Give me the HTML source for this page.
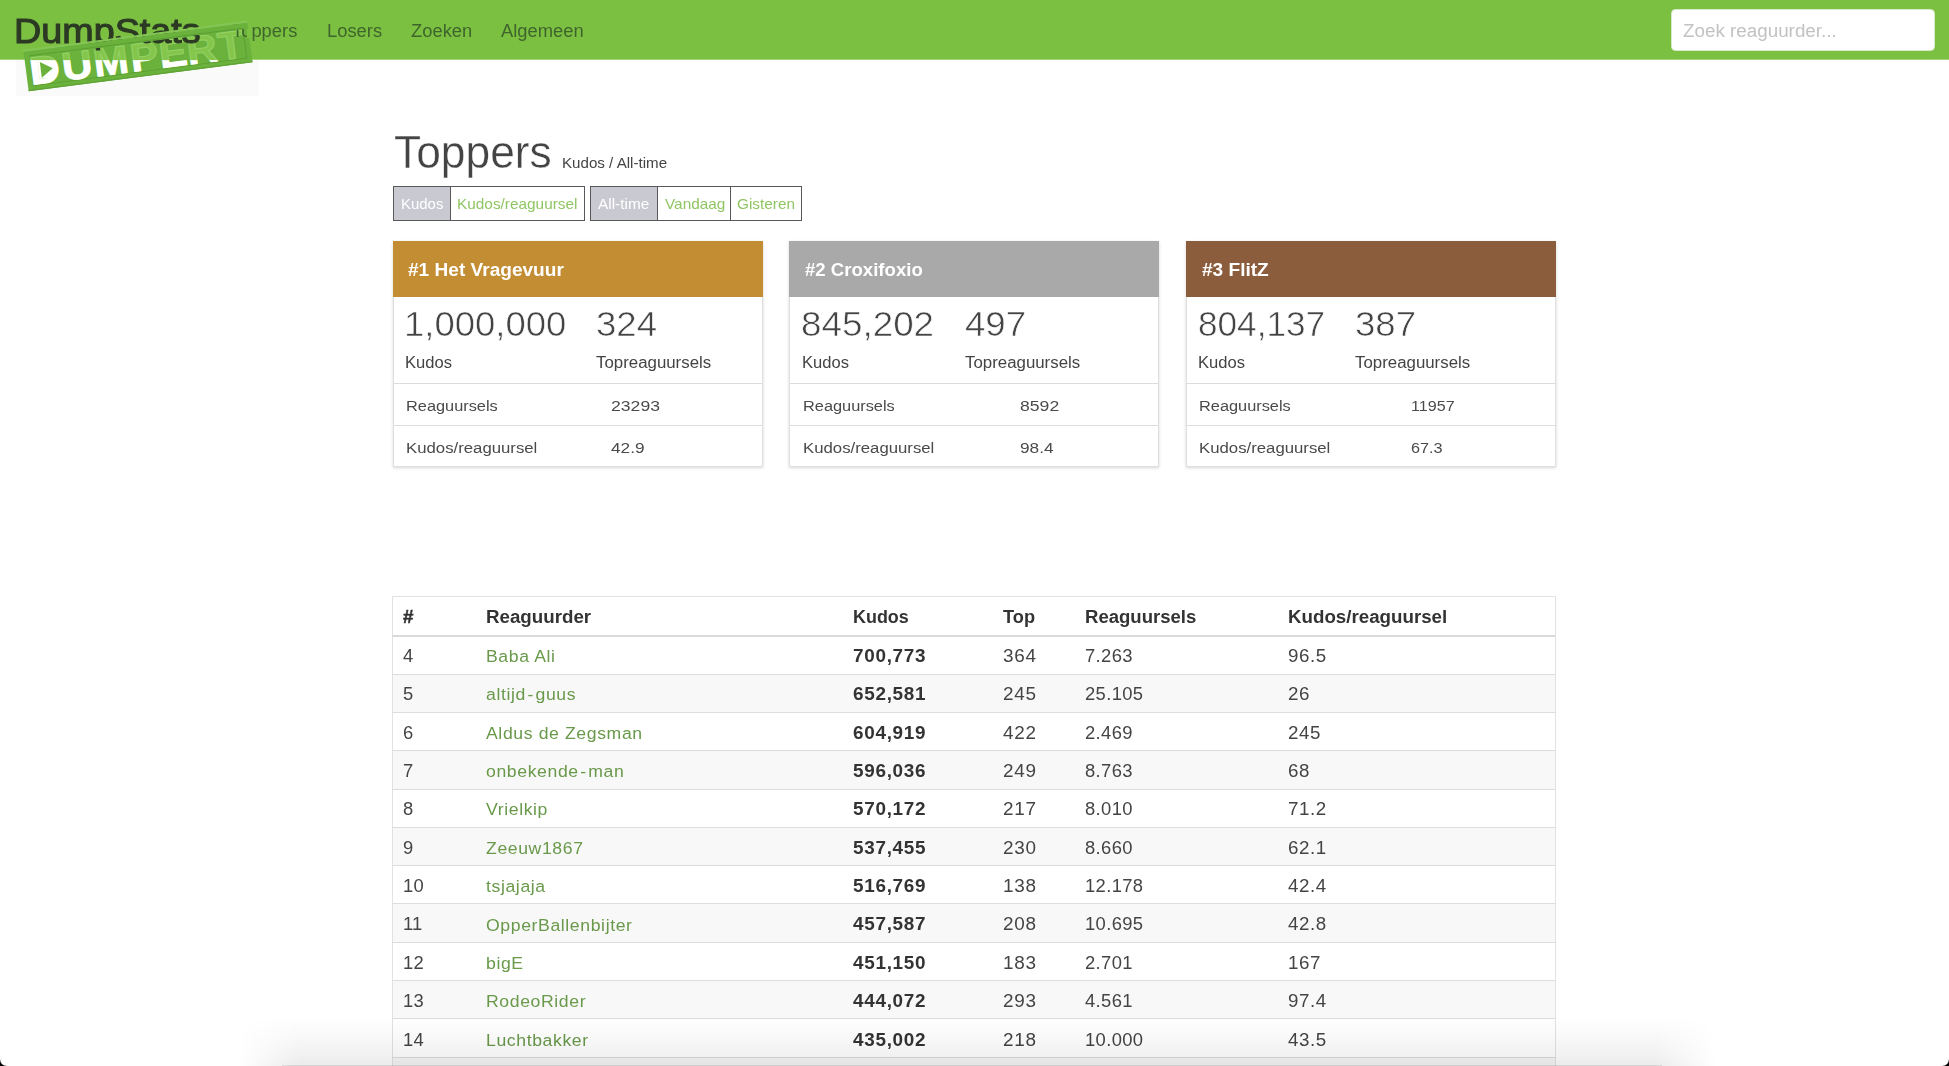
<!DOCTYPE html>
<html lang="nl"><head><meta charset="utf-8"><title>DumpStats - Toppers</title>
<style>
html,body{margin:0;padding:0;}
html{width:1949px;height:1066px;overflow:hidden;}
body{width:1949px;height:1066px;overflow:hidden;background:#fff;position:relative;font-family:"Liberation Sans", sans-serif;}
.t{position:absolute;white-space:nowrap;transform-origin:0 50%;display:block;margin:0;padding:0;font-weight:normal;text-decoration:none;text-align:left;border:0;}
table,thead,tbody,tr,nav,header,section,main{display:contents;}
.r{position:absolute;box-sizing:border-box;}
</style></head>
<body>
<nav>
<div class="r" style="left:0px;top:0px;width:1949px;height:59px;background:#7cc042;"></div>
<div class="r" style="left:0px;top:59px;width:1949px;height:1px;background:#a3d27a;"></div>
<div class="r" style="left:16px;top:60px;width:243px;height:35.5px;background:#fafafa;"></div>
<svg class="r" style="left:0;top:0;overflow:visible" width="300" height="110" viewBox="0 0 300 110">
<defs><linearGradient id="lgf" gradientUnits="userSpaceOnUse" x1="0" y1="50" x2="0" y2="70" gradientTransform="scale(0.93897 1) rotate(7.4) translate(-23.5 -51.5)"><stop offset="0" stop-color="#84c64c"/><stop offset="0.485" stop-color="#84c64c"/><stop offset="0.53" stop-color="#ffffff"/><stop offset="1" stop-color="#ffffff"/></linearGradient><linearGradient id="lgs" gradientUnits="userSpaceOnUse" x1="0" y1="50" x2="0" y2="70" gradientTransform="scale(0.93897 1) rotate(7.4) translate(-23.5 -51.5)"><stop offset="0" stop-color="#95d166"/><stop offset="0.485" stop-color="#95d166"/><stop offset="0.53" stop-color="#ffffff"/><stop offset="1" stop-color="#ffffff"/></linearGradient><linearGradient id="lgd" gradientUnits="userSpaceOnUse" x1="0" y1="50" x2="0" y2="70" gradientTransform="rotate(7.4) translate(-23.5 -51.5)"><stop offset="0" stop-color="#84c64c"/><stop offset="0.485" stop-color="#84c64c"/><stop offset="0.53" stop-color="#ffffff"/><stop offset="1" stop-color="#ffffff"/></linearGradient></defs>
<g transform="translate(23.5 51.5) rotate(-7.4)">
<rect x="0" y="-1.6" width="225.5" height="2.2" fill="#84c655"/>
<rect x="0" y="0" width="225.8" height="40.2" fill="#6bb23d"/>
<rect x="0" y="38.8" width="225.8" height="1.4" fill="#5fa335"/>
<rect x="5.5" y="4.3" width="215" height="31" fill="none" stroke="#5b9f34" stroke-width="1"/>
<text transform="scale(1.065 1)" x="3.19 33.9 63.76 98.5 125.82 152.11 181.6" y="34.3" font-family="Liberation Sans, sans-serif" font-weight="bold" font-size="39.5" fill="url(#lgf)" stroke="url(#lgs)" stroke-width="0.9" stroke-linejoin="round">DUMPERT</text>
<path d="M12.5 11 L25.5 11 L25.5 29.3 L12.5 29.3 Z" fill="url(#lgd)"/>
<path d="M14.8 12.6 L26.8 20.4 L14.8 28.3 Z" fill="#6bb23d"/>
</g></svg>
<a class="t" style="left:14.40px;top:10.07px;font-size:35px;line-height:42px;color:#2c3a24;transform:scaleX(1.078);-webkit-text-stroke:1.1px #2c3a24;">DumpStats</a>
<a class="t" style="left:232.00px;top:19.56px;font-size:18px;line-height:22px;color:#3e652b;transform:scaleX(1.02);">Toppers</a>
<a class="t" style="left:326.70px;top:19.56px;font-size:18px;line-height:22px;color:#3e652b;transform:scaleX(1.02);">Losers</a>
<a class="t" style="left:410.70px;top:19.56px;font-size:18px;line-height:22px;color:#3e652b;transform:scaleX(1.02);">Zoeken</a>
<a class="t" style="left:501.00px;top:19.56px;font-size:18px;line-height:22px;color:#3e652b;transform:scaleX(1.02);">Algemeen</a>
<div class="r" style="left:247.4px;top:23px;width:4.4px;height:15px;background:#7cc042;"></div>
<svg class="r" style="left:0;top:0;overflow:visible" width="300" height="110" viewBox="0 0 300 110">
<g transform="translate(23.5 51.5) rotate(-7.4)">
<rect x="0" y="-1.6" width="225.5" height="2.2" fill="#84c655"/>
<rect x="0" y="0.4" width="225.8" height="5.7" fill="#6bb23d"/>
<rect x="5.5" y="4.6" width="215" height="1" fill="#5b9f34"/>
</g></svg>
<div class="r" style="left:1671px;top:9.2px;width:264px;height:41.4px;background:#fff;border-radius:4.5px;border:1px solid #d9e8cc;"></div>
<label class="t" style="left:1682.90px;top:19.56px;font-size:18px;line-height:22px;color:#c2c2c2;transform:scaleX(1.045);">Zoek reaguurder...</label>
</nav>
<main>
<h1 class="t" style="left:393.50px;top:124.56px;font-size:46px;line-height:55px;color:#444;transform:scaleX(0.964);-webkit-text-stroke:0.4px #fff;">Toppers</h1>
<small class="t" style="left:562.40px;top:154.65px;font-size:14px;line-height:17px;color:#444;transform:scaleX(1.08);">Kudos / All-time</small>
<div class="r" style="left:393px;top:185.6px;width:58px;height:35.7px;background:#c9c9d1;border:1.7px solid #58585a;"></div>
<a class="t" style="left:400.50px;top:195.68px;font-size:14.5px;line-height:17px;color:#fff;transform:scaleX(1.03);">Kudos</a>
<div class="r" style="left:450px;top:185.6px;width:135px;height:35.7px;background:#fff;border:1.7px solid #58585a;"></div>
<a class="t" style="left:456.50px;top:195.68px;font-size:14.5px;line-height:17px;color:#90c563;transform:scaleX(1.06);">Kudos/reaguursel</a>
<div class="r" style="left:590px;top:185.6px;width:68px;height:35.7px;background:#c9c9d1;border:1.7px solid #58585a;"></div>
<a class="t" style="left:597.50px;top:195.68px;font-size:14.5px;line-height:17px;color:#fff;transform:scaleX(1.06);">All-time</a>
<div class="r" style="left:657px;top:185.6px;width:74px;height:35.7px;background:#fff;border:1.7px solid #58585a;"></div>
<a class="t" style="left:664.50px;top:195.68px;font-size:14.5px;line-height:17px;color:#90c563;transform:scaleX(1.06);">Vandaag</a>
<div class="r" style="left:730px;top:185.6px;width:72px;height:35.7px;background:#fff;border:1.7px solid #58585a;"></div>
<a class="t" style="left:737.00px;top:195.68px;font-size:14.5px;line-height:17px;color:#90c563;transform:scaleX(1.06);">Gisteren</a>
<section>
<div class="r" style="left:392.9px;top:241px;width:370.2px;height:226px;background:#fff;border:1px solid #dfdfdf;box-shadow:0 1px 3px rgba(0,0,0,.16);"></div>
<div class="r" style="left:392.9px;top:241px;width:370.2px;height:56px;background:#c38d34;"></div>
<h5 class="t" style="left:408.30px;top:259.94px;font-size:17.5px;line-height:21px;color:#fff;font-weight:bold;transform:scaleX(1.09);">#1 Het Vragevuur</h5>
<span class="t" style="left:404.30px;top:303.07px;font-size:35px;line-height:42px;color:#444;transform:scaleX(1.043);-webkit-text-stroke:0.6px #fff;">1,000,000</span>
<span class="t" style="left:595.50px;top:303.07px;font-size:35px;line-height:42px;color:#444;transform:scaleX(1.046);-webkit-text-stroke:0.6px #fff;">324</span>
<span class="t" style="left:405.10px;top:352.56px;font-size:16px;line-height:19px;color:#444;transform:scaleX(1.034);">Kudos</span>
<span class="t" style="left:595.60px;top:352.56px;font-size:16px;line-height:19px;color:#444;transform:scaleX(1.053);">Topreaguursels</span>
<div class="r" style="left:393.9px;top:382.5px;width:368.2px;height:1px;background:#dcdcdc;"></div>
<span class="t" style="left:406.10px;top:396.13px;font-size:15.5px;line-height:19px;color:#4a4a4a;transform:scaleX(1.054);">Reaguursels</span>
<span class="t" style="left:610.60px;top:396.13px;font-size:15.5px;line-height:19px;color:#4a4a4a;transform:scaleX(1.136);">23293</span>
<div class="r" style="left:393.9px;top:425px;width:368.2px;height:1px;background:#dcdcdc;"></div>
<span class="t" style="left:406.10px;top:437.73px;font-size:15.5px;line-height:19px;color:#4a4a4a;transform:scaleX(1.081);">Kudos/reaguursel</span>
<span class="t" style="left:610.60px;top:437.73px;font-size:15.5px;line-height:19px;color:#4a4a4a;transform:scaleX(1.11);">42.9</span>
</section>
<section>
<div class="r" style="left:789.3px;top:241px;width:370.2px;height:226px;background:#fff;border:1px solid #dfdfdf;box-shadow:0 1px 3px rgba(0,0,0,.16);"></div>
<div class="r" style="left:789.3px;top:241px;width:370.2px;height:56px;background:#a9a9a9;"></div>
<h5 class="t" style="left:804.70px;top:259.94px;font-size:17.5px;line-height:21px;color:#fff;font-weight:bold;transform:scaleX(1.062);">#2 Croxifoxio</h5>
<span class="t" style="left:800.70px;top:303.07px;font-size:35px;line-height:42px;color:#444;transform:scaleX(1.052);-webkit-text-stroke:0.6px #fff;">845,202</span>
<span class="t" style="left:964.50px;top:303.07px;font-size:35px;line-height:42px;color:#444;transform:scaleX(1.046);-webkit-text-stroke:0.6px #fff;">497</span>
<span class="t" style="left:801.50px;top:352.56px;font-size:16px;line-height:19px;color:#444;transform:scaleX(1.034);">Kudos</span>
<span class="t" style="left:964.60px;top:352.56px;font-size:16px;line-height:19px;color:#444;transform:scaleX(1.053);">Topreaguursels</span>
<div class="r" style="left:790.3px;top:382.5px;width:368.2px;height:1px;background:#dcdcdc;"></div>
<span class="t" style="left:802.50px;top:396.13px;font-size:15.5px;line-height:19px;color:#4a4a4a;transform:scaleX(1.054);">Reaguursels</span>
<span class="t" style="left:1019.60px;top:396.13px;font-size:15.5px;line-height:19px;color:#4a4a4a;transform:scaleX(1.136);">8592</span>
<div class="r" style="left:790.3px;top:425px;width:368.2px;height:1px;background:#dcdcdc;"></div>
<span class="t" style="left:802.50px;top:437.73px;font-size:15.5px;line-height:19px;color:#4a4a4a;transform:scaleX(1.081);">Kudos/reaguursel</span>
<span class="t" style="left:1019.60px;top:437.73px;font-size:15.5px;line-height:19px;color:#4a4a4a;transform:scaleX(1.11);">98.4</span>
</section>
<section>
<div class="r" style="left:1186.1px;top:241px;width:370.2px;height:226px;background:#fff;border:1px solid #dfdfdf;box-shadow:0 1px 3px rgba(0,0,0,.16);"></div>
<div class="r" style="left:1186.1px;top:241px;width:370.2px;height:56px;background:#8c5d3d;"></div>
<h5 class="t" style="left:1201.50px;top:259.94px;font-size:17.5px;line-height:21px;color:#fff;font-weight:bold;transform:scaleX(1.09);">#3 FlitZ</h5>
<span class="t" style="left:1197.50px;top:303.07px;font-size:35px;line-height:42px;color:#444;transform:scaleX(1.004);-webkit-text-stroke:0.6px #fff;">804,137</span>
<span class="t" style="left:1355.00px;top:303.07px;font-size:35px;line-height:42px;color:#444;transform:scaleX(1.046);-webkit-text-stroke:0.6px #fff;">387</span>
<span class="t" style="left:1198.30px;top:352.56px;font-size:16px;line-height:19px;color:#444;transform:scaleX(1.034);">Kudos</span>
<span class="t" style="left:1355.10px;top:352.56px;font-size:16px;line-height:19px;color:#444;transform:scaleX(1.053);">Topreaguursels</span>
<div class="r" style="left:1187.1px;top:382.5px;width:368.2px;height:1px;background:#dcdcdc;"></div>
<span class="t" style="left:1199.30px;top:396.13px;font-size:15.5px;line-height:19px;color:#4a4a4a;transform:scaleX(1.054);">Reaguursels</span>
<span class="t" style="left:1410.60px;top:396.13px;font-size:15.5px;line-height:19px;color:#4a4a4a;transform:scaleX(1.04);">11957</span>
<div class="r" style="left:1187.1px;top:425px;width:368.2px;height:1px;background:#dcdcdc;"></div>
<span class="t" style="left:1199.30px;top:437.73px;font-size:15.5px;line-height:19px;color:#4a4a4a;transform:scaleX(1.081);">Kudos/reaguursel</span>
<span class="t" style="left:1410.60px;top:437.73px;font-size:15.5px;line-height:19px;color:#4a4a4a;transform:scaleX(1.047);">67.3</span>
</section>
<div class="r" style="left:392.2px;top:596.2px;width:1163.8px;height:469.8px;background:#fff;border:1px solid #e2e2e2;border-bottom:0;"></div>
<div class="r" style="left:393.2px;top:674.1899999999999px;width:1161.8px;height:38.29px;background:#f8f8f8;"></div>
<div class="r" style="left:393.2px;top:750.77px;width:1161.8px;height:38.29px;background:#f8f8f8;"></div>
<div class="r" style="left:393.2px;top:827.3499999999999px;width:1161.8px;height:38.29px;background:#f8f8f8;"></div>
<div class="r" style="left:393.2px;top:903.93px;width:1161.8px;height:38.29px;background:#f8f8f8;"></div>
<div class="r" style="left:393.2px;top:980.51px;width:1161.8px;height:38.29px;background:#f8f8f8;"></div>
<div class="r" style="left:393.2px;top:1057.09px;width:1161.8px;height:8.910000000000082px;background:#f8f8f8;"></div>
<div class="r" style="left:392.2px;top:634.6px;width:1163.8px;height:2px;background:#dadada;"></div>
<div class="r" style="left:392.2px;top:673.6899999999999px;width:1163.8px;height:1px;background:#dddddd;"></div>
<div class="r" style="left:392.2px;top:711.98px;width:1163.8px;height:1px;background:#dddddd;"></div>
<div class="r" style="left:392.2px;top:750.27px;width:1163.8px;height:1px;background:#dddddd;"></div>
<div class="r" style="left:392.2px;top:788.56px;width:1163.8px;height:1px;background:#dddddd;"></div>
<div class="r" style="left:392.2px;top:826.8499999999999px;width:1163.8px;height:1px;background:#dddddd;"></div>
<div class="r" style="left:392.2px;top:865.14px;width:1163.8px;height:1px;background:#dddddd;"></div>
<div class="r" style="left:392.2px;top:903.43px;width:1163.8px;height:1px;background:#dddddd;"></div>
<div class="r" style="left:392.2px;top:941.72px;width:1163.8px;height:1px;background:#dddddd;"></div>
<div class="r" style="left:392.2px;top:980.01px;width:1163.8px;height:1px;background:#dddddd;"></div>
<div class="r" style="left:392.2px;top:1018.3px;width:1163.8px;height:1px;background:#dddddd;"></div>
<div class="r" style="left:392.2px;top:1056.59px;width:1163.8px;height:1px;background:#dddddd;"></div>
<table><thead><tr>
<th class="t" style="left:402.60px;top:606.74px;font-size:17.5px;line-height:21px;color:#333;font-weight:bold;transform:scaleX(1.07);-webkit-text-stroke:0.5px #333;">#</th>
<th class="t" style="left:485.60px;top:606.74px;font-size:17.5px;line-height:21px;color:#333;font-weight:bold;transform:scaleX(1.07);">Reaguurder</th>
<th class="t" style="left:852.80px;top:606.74px;font-size:17.5px;line-height:21px;color:#333;font-weight:bold;transform:scaleX(1.024);">Kudos</th>
<th class="t" style="left:1003.40px;top:606.74px;font-size:17.5px;line-height:21px;color:#333;font-weight:bold;transform:scaleX(1.04);">Top</th>
<th class="t" style="left:1085.00px;top:606.74px;font-size:17.5px;line-height:21px;color:#333;font-weight:bold;transform:scaleX(1.06);">Reaguursels</th>
<th class="t" style="left:1288.00px;top:606.74px;font-size:17.5px;line-height:21px;color:#333;font-weight:bold;transform:scaleX(1.07);">Kudos/reaguursel</th>
</tr></thead><tbody>
<tr>
<td class="t" style="left:402.60px;top:645.74px;font-size:17.5px;line-height:21px;color:#444;transform:scaleX(1.05);letter-spacing:0.2px;">4</td>
<td class="t" style="left:485.60px;top:645.84px;font-size:17.2px;line-height:21px;color:#69994a;transform:scaleX(1.025);letter-spacing:0.6px;"><a style="color:inherit;text-decoration:none">Baba Ali</a></td>
<td class="t" style="left:852.80px;top:645.74px;font-size:17.5px;line-height:21px;color:#333;font-weight:bold;transform:scaleX(1.08);letter-spacing:0.65px;"><b>700,773</b></td>
<td class="t" style="left:1003.40px;top:645.74px;font-size:17.5px;line-height:21px;color:#444;transform:scaleX(1.08);letter-spacing:0.7px;">364</td>
<td class="t" style="left:1085.00px;top:645.74px;font-size:17.5px;line-height:21px;color:#444;transform:scaleX(1.05);letter-spacing:0.35px;">7.263</td>
<td class="t" style="left:1288.00px;top:645.74px;font-size:17.5px;line-height:21px;color:#444;transform:scaleX(1.07);letter-spacing:0.5px;">96.5</td>
</tr>
<tr>
<td class="t" style="left:402.60px;top:684.12px;font-size:17.5px;line-height:21px;color:#444;transform:scaleX(1.05);letter-spacing:0.2px;">5</td>
<td class="t" style="left:485.60px;top:684.22px;font-size:17.2px;line-height:21px;color:#69994a;transform:scaleX(1.025);letter-spacing:0.6px;"><a style="color:inherit;text-decoration:none">altijd<span style="margin:0 1.5px">-</span>guus</a></td>
<td class="t" style="left:852.80px;top:684.12px;font-size:17.5px;line-height:21px;color:#333;font-weight:bold;transform:scaleX(1.08);letter-spacing:0.65px;"><b>652,581</b></td>
<td class="t" style="left:1003.40px;top:684.12px;font-size:17.5px;line-height:21px;color:#444;transform:scaleX(1.08);letter-spacing:0.7px;">245</td>
<td class="t" style="left:1085.00px;top:684.12px;font-size:17.5px;line-height:21px;color:#444;transform:scaleX(1.05);letter-spacing:0.35px;">25.105</td>
<td class="t" style="left:1288.00px;top:684.12px;font-size:17.5px;line-height:21px;color:#444;transform:scaleX(1.07);letter-spacing:0.5px;">26</td>
</tr>
<tr>
<td class="t" style="left:402.60px;top:722.50px;font-size:17.5px;line-height:21px;color:#444;transform:scaleX(1.05);letter-spacing:0.2px;">6</td>
<td class="t" style="left:485.60px;top:722.60px;font-size:17.2px;line-height:21px;color:#69994a;transform:scaleX(1.025);letter-spacing:0.6px;"><a style="color:inherit;text-decoration:none">Aldus de Zegsman</a></td>
<td class="t" style="left:852.80px;top:722.50px;font-size:17.5px;line-height:21px;color:#333;font-weight:bold;transform:scaleX(1.08);letter-spacing:0.65px;"><b>604,919</b></td>
<td class="t" style="left:1003.40px;top:722.50px;font-size:17.5px;line-height:21px;color:#444;transform:scaleX(1.08);letter-spacing:0.7px;">422</td>
<td class="t" style="left:1085.00px;top:722.50px;font-size:17.5px;line-height:21px;color:#444;transform:scaleX(1.05);letter-spacing:0.35px;">2.469</td>
<td class="t" style="left:1288.00px;top:722.50px;font-size:17.5px;line-height:21px;color:#444;transform:scaleX(1.07);letter-spacing:0.5px;">245</td>
</tr>
<tr>
<td class="t" style="left:402.60px;top:760.88px;font-size:17.5px;line-height:21px;color:#444;transform:scaleX(1.05);letter-spacing:0.2px;">7</td>
<td class="t" style="left:485.60px;top:760.98px;font-size:17.2px;line-height:21px;color:#69994a;transform:scaleX(1.025);letter-spacing:0.6px;"><a style="color:inherit;text-decoration:none">onbekende<span style="margin:0 1.5px">-</span>man</a></td>
<td class="t" style="left:852.80px;top:760.88px;font-size:17.5px;line-height:21px;color:#333;font-weight:bold;transform:scaleX(1.08);letter-spacing:0.65px;"><b>596,036</b></td>
<td class="t" style="left:1003.40px;top:760.88px;font-size:17.5px;line-height:21px;color:#444;transform:scaleX(1.08);letter-spacing:0.7px;">249</td>
<td class="t" style="left:1085.00px;top:760.88px;font-size:17.5px;line-height:21px;color:#444;transform:scaleX(1.05);letter-spacing:0.35px;">8.763</td>
<td class="t" style="left:1288.00px;top:760.88px;font-size:17.5px;line-height:21px;color:#444;transform:scaleX(1.07);letter-spacing:0.5px;">68</td>
</tr>
<tr>
<td class="t" style="left:402.60px;top:799.26px;font-size:17.5px;line-height:21px;color:#444;transform:scaleX(1.05);letter-spacing:0.2px;">8</td>
<td class="t" style="left:485.60px;top:799.36px;font-size:17.2px;line-height:21px;color:#69994a;transform:scaleX(1.025);letter-spacing:0.6px;"><a style="color:inherit;text-decoration:none">Vrielkip</a></td>
<td class="t" style="left:852.80px;top:799.26px;font-size:17.5px;line-height:21px;color:#333;font-weight:bold;transform:scaleX(1.08);letter-spacing:0.65px;"><b>570,172</b></td>
<td class="t" style="left:1003.40px;top:799.26px;font-size:17.5px;line-height:21px;color:#444;transform:scaleX(1.08);letter-spacing:0.7px;">217</td>
<td class="t" style="left:1085.00px;top:799.26px;font-size:17.5px;line-height:21px;color:#444;transform:scaleX(1.05);letter-spacing:0.35px;">8.010</td>
<td class="t" style="left:1288.00px;top:799.26px;font-size:17.5px;line-height:21px;color:#444;transform:scaleX(1.07);letter-spacing:0.5px;">71.2</td>
</tr>
<tr>
<td class="t" style="left:402.60px;top:837.64px;font-size:17.5px;line-height:21px;color:#444;transform:scaleX(1.05);letter-spacing:0.2px;">9</td>
<td class="t" style="left:485.60px;top:837.74px;font-size:17.2px;line-height:21px;color:#69994a;transform:scaleX(1.025);letter-spacing:0.6px;"><a style="color:inherit;text-decoration:none">Zeeuw1867</a></td>
<td class="t" style="left:852.80px;top:837.64px;font-size:17.5px;line-height:21px;color:#333;font-weight:bold;transform:scaleX(1.08);letter-spacing:0.65px;"><b>537,455</b></td>
<td class="t" style="left:1003.40px;top:837.64px;font-size:17.5px;line-height:21px;color:#444;transform:scaleX(1.08);letter-spacing:0.7px;">230</td>
<td class="t" style="left:1085.00px;top:837.64px;font-size:17.5px;line-height:21px;color:#444;transform:scaleX(1.05);letter-spacing:0.35px;">8.660</td>
<td class="t" style="left:1288.00px;top:837.64px;font-size:17.5px;line-height:21px;color:#444;transform:scaleX(1.07);letter-spacing:0.5px;">62.1</td>
</tr>
<tr>
<td class="t" style="left:402.60px;top:876.02px;font-size:17.5px;line-height:21px;color:#444;transform:scaleX(1.05);letter-spacing:0.2px;">10</td>
<td class="t" style="left:485.60px;top:876.12px;font-size:17.2px;line-height:21px;color:#69994a;transform:scaleX(1.025);letter-spacing:0.6px;"><a style="color:inherit;text-decoration:none">tsjajaja</a></td>
<td class="t" style="left:852.80px;top:876.02px;font-size:17.5px;line-height:21px;color:#333;font-weight:bold;transform:scaleX(1.08);letter-spacing:0.65px;"><b>516,769</b></td>
<td class="t" style="left:1003.40px;top:876.02px;font-size:17.5px;line-height:21px;color:#444;transform:scaleX(1.08);letter-spacing:0.7px;">138</td>
<td class="t" style="left:1085.00px;top:876.02px;font-size:17.5px;line-height:21px;color:#444;transform:scaleX(1.05);letter-spacing:0.35px;">12.178</td>
<td class="t" style="left:1288.00px;top:876.02px;font-size:17.5px;line-height:21px;color:#444;transform:scaleX(1.07);letter-spacing:0.5px;">42.4</td>
</tr>
<tr>
<td class="t" style="left:402.60px;top:914.40px;font-size:17.5px;line-height:21px;color:#444;transform:scaleX(1.05);letter-spacing:0.2px;">11</td>
<td class="t" style="left:485.60px;top:914.50px;font-size:17.2px;line-height:21px;color:#69994a;transform:scaleX(1.025);letter-spacing:0.6px;"><a style="color:inherit;text-decoration:none">OpperBallenbijter</a></td>
<td class="t" style="left:852.80px;top:914.40px;font-size:17.5px;line-height:21px;color:#333;font-weight:bold;transform:scaleX(1.08);letter-spacing:0.65px;"><b>457,587</b></td>
<td class="t" style="left:1003.40px;top:914.40px;font-size:17.5px;line-height:21px;color:#444;transform:scaleX(1.08);letter-spacing:0.7px;">208</td>
<td class="t" style="left:1085.00px;top:914.40px;font-size:17.5px;line-height:21px;color:#444;transform:scaleX(1.05);letter-spacing:0.35px;">10.695</td>
<td class="t" style="left:1288.00px;top:914.40px;font-size:17.5px;line-height:21px;color:#444;transform:scaleX(1.07);letter-spacing:0.5px;">42.8</td>
</tr>
<tr>
<td class="t" style="left:402.60px;top:952.78px;font-size:17.5px;line-height:21px;color:#444;transform:scaleX(1.05);letter-spacing:0.2px;">12</td>
<td class="t" style="left:485.60px;top:952.88px;font-size:17.2px;line-height:21px;color:#69994a;transform:scaleX(1.025);letter-spacing:0.6px;"><a style="color:inherit;text-decoration:none">bigE</a></td>
<td class="t" style="left:852.80px;top:952.78px;font-size:17.5px;line-height:21px;color:#333;font-weight:bold;transform:scaleX(1.08);letter-spacing:0.65px;"><b>451,150</b></td>
<td class="t" style="left:1003.40px;top:952.78px;font-size:17.5px;line-height:21px;color:#444;transform:scaleX(1.08);letter-spacing:0.7px;">183</td>
<td class="t" style="left:1085.00px;top:952.78px;font-size:17.5px;line-height:21px;color:#444;transform:scaleX(1.05);letter-spacing:0.35px;">2.701</td>
<td class="t" style="left:1288.00px;top:952.78px;font-size:17.5px;line-height:21px;color:#444;transform:scaleX(1.07);letter-spacing:0.5px;">167</td>
</tr>
<tr>
<td class="t" style="left:402.60px;top:991.16px;font-size:17.5px;line-height:21px;color:#444;transform:scaleX(1.05);letter-spacing:0.2px;">13</td>
<td class="t" style="left:485.60px;top:991.26px;font-size:17.2px;line-height:21px;color:#69994a;transform:scaleX(1.025);letter-spacing:0.6px;"><a style="color:inherit;text-decoration:none">RodeoRider</a></td>
<td class="t" style="left:852.80px;top:991.16px;font-size:17.5px;line-height:21px;color:#333;font-weight:bold;transform:scaleX(1.08);letter-spacing:0.65px;"><b>444,072</b></td>
<td class="t" style="left:1003.40px;top:991.16px;font-size:17.5px;line-height:21px;color:#444;transform:scaleX(1.08);letter-spacing:0.7px;">293</td>
<td class="t" style="left:1085.00px;top:991.16px;font-size:17.5px;line-height:21px;color:#444;transform:scaleX(1.05);letter-spacing:0.35px;">4.561</td>
<td class="t" style="left:1288.00px;top:991.16px;font-size:17.5px;line-height:21px;color:#444;transform:scaleX(1.07);letter-spacing:0.5px;">97.4</td>
</tr>
<tr>
<td class="t" style="left:402.60px;top:1029.54px;font-size:17.5px;line-height:21px;color:#444;transform:scaleX(1.05);letter-spacing:0.2px;">14</td>
<td class="t" style="left:485.60px;top:1029.64px;font-size:17.2px;line-height:21px;color:#69994a;transform:scaleX(1.025);letter-spacing:0.6px;"><a style="color:inherit;text-decoration:none">Luchtbakker</a></td>
<td class="t" style="left:852.80px;top:1029.54px;font-size:17.5px;line-height:21px;color:#333;font-weight:bold;transform:scaleX(1.08);letter-spacing:0.65px;"><b>435,002</b></td>
<td class="t" style="left:1003.40px;top:1029.54px;font-size:17.5px;line-height:21px;color:#444;transform:scaleX(1.08);letter-spacing:0.7px;">218</td>
<td class="t" style="left:1085.00px;top:1029.54px;font-size:17.5px;line-height:21px;color:#444;transform:scaleX(1.05);letter-spacing:0.35px;">10.000</td>
<td class="t" style="left:1288.00px;top:1029.54px;font-size:17.5px;line-height:21px;color:#444;transform:scaleX(1.07);letter-spacing:0.5px;">43.5</td>
</tr>
</tbody></table>
</main>
<div class="r" style="left:238px;top:1016px;width:1478px;height:50px;background:transparent;background:linear-gradient(to bottom,rgba(0,0,0,0) 0%,rgba(0,0,0,.012) 20%,rgba(0,0,0,.03) 48%,rgba(0,0,0,.055) 78%,rgba(0,0,0,.078) 100%);-webkit-mask-image:linear-gradient(to right,transparent 0,#000 62px,#000 1416px,transparent 1478px);mask-image:linear-gradient(to right,transparent 0,#000 62px,#000 1416px,transparent 1478px);"></div>
<div class="r" style="left:282px;top:1064.6px;width:1380px;height:1.4px;background:rgba(0,0,0,.09);"></div>
<svg class="r" style="left:0;top:1059px" width="1949" height="7" viewBox="0 0 1949 7"><path d="M0 0 Q0.3 6.7 7 7 L0 7 Z" fill="#000"/><path d="M1949 0 Q1948.7 6.7 1942 7 L1949 7 Z" fill="#000"/></svg>
</body></html>
